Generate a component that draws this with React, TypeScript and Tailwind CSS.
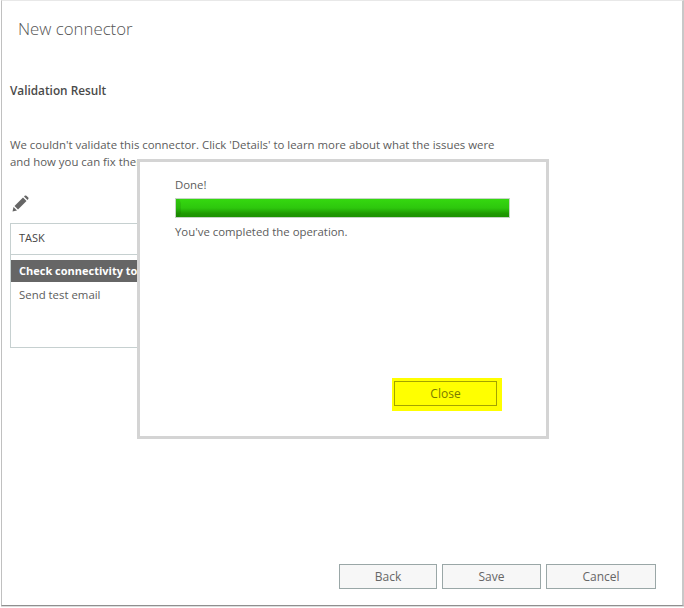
import React from "react";

function FooterButton({ label, width }: { label: string; width: string }) {
  return (
    <button className={`${width} h-[25px] border border-[#9aa7a7] bg-[#f7f7f7] text-[12px] text-[#666666] flex items-center justify-center`}>
      {label}
    </button>
  );
}

export default function App() {
  return (
    <div className="relative w-[684px] h-[608px] bg-white font-['Open_Sans','Noto_Sans',sans-serif] text-[11.4px] text-[#5c5c5c] overflow-hidden">
      <div className="flex flex-col w-[683px] h-[606px] ml-[1px] border-l border-r-2 border-t border-b border-l-[#c0c0c0] border-r-[#c8c8c8] border-t-[#e8e8e8] border-b-[#8f8f8f] shadow-[0_1px_0_#dcdcdc] pl-[8px]">
        <h1 className="mt-[16px] ml-[8px] text-[16.8px] leading-[24px] font-light text-[#555555]">New connector</h1>
        <h2 className="mt-[41px] font-semibold text-[11.8px] leading-[16px] text-[#4a4a4a]">Validation Result</h2>
        <p className="mt-[38px] w-[490px] leading-[17px]">
          We couldn't validate this connector. Click 'Details' to learn more about what the issues were and how you can fix them.
        </p>
        <svg className="mt-[25px] ml-[2px] w-[17px] h-[17px]" viewBox="0 0 17 17" fill="#666666">
          <path d="M0.5 16.5 L1.5 12 L5 15.5 Z" />
          <path d="M2.5 11 L11 2.5 L14.5 6 L6 14.5 Z" />
          <path d="M12 1.5 L13 0.6 Q13.7 0.2 14.4 0.7 L16.3 2.6 Q16.8 3.3 16.3 4 L15.5 5 Z" />
        </svg>
        <div className="mt-[11px] w-[530px] h-[125px] border border-[#c6d0d0] flex flex-col">
          <div className="h-[31px] shrink-0 border-b border-[#c6d0d0] pl-[8px] pb-[2px] flex items-center text-[#444444] text-[11px]">TASK</div>
          <div className="mt-[5px] h-[22px] shrink-0 bg-[#666666] pl-[8px] flex items-center font-bold text-[11px] text-white whitespace-nowrap">
            Check connectivity to
          </div>
          <div className="h-[26px] pl-[8px] flex items-center">Send test email</div>
        </div>
        <div className="mt-auto mb-[16px] flex justify-end gap-[5px] pr-[26px]">
          <FooterButton label="Back" width="w-[98px]" />
          <FooterButton label="Save" width="w-[99px]" />
          <FooterButton label="Cancel" width="w-[110px]" />
        </div>
      </div>

      <div className="absolute left-[137px] top-[159px] w-[412px] h-[280px] bg-white border-[3px] border-[#d4d4d4] pl-[35px] pr-[36px] flex flex-col">
        <div className="mt-[15px] leading-[16px]">Done!</div>
        <div className="mt-[5px] h-[20px] border border-[#c5d5c5] bg-[linear-gradient(#35d810,#2dc70d_50%,#1f9a02_80%,#1c9200)] relative">
          <svg className="absolute left-0 top-0 h-full w-[5px]" viewBox="0 0 5 18" preserveAspectRatio="none">
            <path d="M0 0 L3 0 L5 4 L5 14 L3 18 L0 18 Z" fill="#000000" fillOpacity="0.08" />
          </svg>
        </div>
        <div className="mt-[6px] leading-[16px]">You've completed the operation.</div>
        <div className="mt-auto mb-[25px] self-end mr-[8px] w-[110px] h-[33px] bg-[#ffff00] pl-[2px] pt-[3px]">
          <button className="w-[103px] h-[25px] border border-[#a3a300] text-[12px] text-[#7a7a00] flex items-center justify-center">Close</button>
        </div>
      </div>
    </div>
  );
}
